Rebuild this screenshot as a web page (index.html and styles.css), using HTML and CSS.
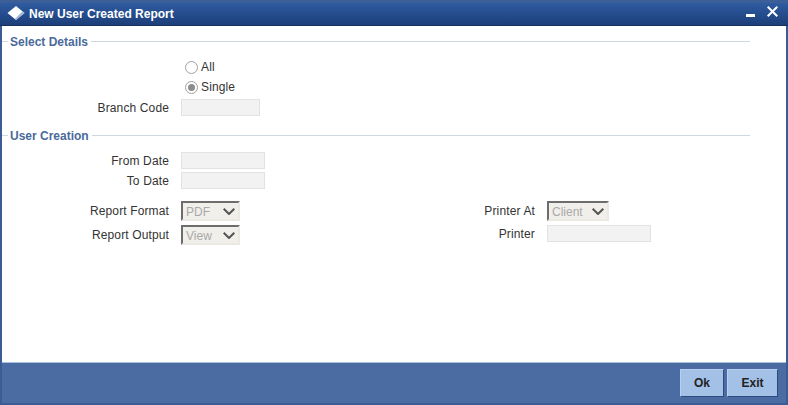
FILE: index.html
```html
<!DOCTYPE html>
<html lang="en">
<head>
<meta charset="utf-8">
<title>New User Created Report</title>
<link rel="stylesheet" href="styles.css">
</head>
<body>
<div class="window">
  <header class="titlebar">
    <svg class="logo" width="18" height="14" viewBox="0 0 18 14"><path d="M9 0 17.5 7 9 14 0.5 7Z" fill="#fff"/><path d="M15.5 5.4 17.5 7 9 14 7.8 13Z" fill="#9fb4d2"/></svg>
    <h1 class="title">New User Created Report</h1>
    <div class="controls">
      <svg width="9" height="3" viewBox="0 0 9 3" class="min"><rect width="9" height="3" fill="#fff"/></svg>
      <svg width="11" height="11" viewBox="0 0 11 11" class="close"><path d="M0.7 0.7 10.3 10.3M10.3 0.7 0.7 10.3" stroke="#fff" stroke-width="2" fill="none"/></svg>
    </div>
  </header>
  <main class="content">
    <div class="legend legend-first"><span>Select Details</span></div>
    <div class="radios">
      <label class="radio-row"><span class="radio"></span>All</label>
      <label class="radio-row"><span class="radio checked"></span>Single</label>
    </div>
    <div class="row branch"><span class="label">Branch Code</span><span class="input w79"></span></div>
    <div class="legend legend-second"><span>User Creation</span></div>
    <div class="dates">
      <div class="row"><span class="label">From Date</span><span class="input w84"></span></div>
      <div class="row"><span class="label">To Date</span><span class="input w84"></span></div>
    </div>
    <div class="columns">
      <div class="col-left">
        <div class="row sel-row"><span class="label">Report Format</span><span class="select w59">PDF<svg class="chev" width="12" height="7" viewBox="0 0 12 7"><path d="M0.7 0.7 6 6 11.3 0.7" stroke="#555" stroke-width="2" fill="none"/></svg></span></div>
        <div class="row sel-row"><span class="label">Report Output</span><span class="select w59">View<svg class="chev" width="12" height="7" viewBox="0 0 12 7"><path d="M0.7 0.7 6 6 11.3 0.7" stroke="#555" stroke-width="2" fill="none"/></svg></span></div>
      </div>
      <div class="col-right">
        <div class="row sel-row"><span class="label">Printer At</span><span class="select w62">Client<svg class="chev" width="12" height="7" viewBox="0 0 12 7"><path d="M0.7 0.7 6 6 11.3 0.7" stroke="#555" stroke-width="2" fill="none"/></svg></span></div>
        <div class="row"><span class="label">Printer</span><span class="input w104"></span></div>
      </div>
    </div>
  </main>
  <footer class="footer">
    <button class="btn" type="button">Ok</button>
    <button class="btn" type="button">Exit</button>
  </footer>
</div>
</body>
</html>
```
FILE: styles.css
```css
* { box-sizing: border-box; }
html, body { margin: 0; padding: 0; }
body { width: 788px; height: 405px; overflow: hidden; font-family: "Liberation Sans", Arial, sans-serif; font-size: 12px; letter-spacing: 0.13px; color: #333; background: #fff; }
.window { width: 788px; height: 405px; display: flex; flex-direction: column; background: #3a5b93; padding: 0 2px 2px; }
.titlebar { flex: none; height: 26px; margin: 0 -2px; display: flex; align-items: center; border-top: 3px solid #3d5f98; border-bottom: 1px solid #16305f; background: linear-gradient(#2f5ba0, #234a8a 60%, #1d3f78); padding: 0 10px 0 7px; }
.logo { flex: none; margin: 0 4px 2px 0; }
.title { margin: 0; font-size: 12px; font-weight: bold; color: #fff; letter-spacing: 0; }
.controls { margin-left: auto; display: flex; align-items: flex-start; gap: 12px; padding-bottom: 6px; }
.min { margin-top: 8px; }
.content { flex: 1; background: #fff; padding-top: 7px; min-height: 0; }
.legend { display: flex; align-items: center; height: 16px; width: 748px; color: #4a6a9b; font-weight: bold; letter-spacing: 0; }
.legend span { position: relative; top: 1px; }
.legend::before { content: ""; width: 6px; height: 1px; background: #cfd8e0; margin-right: 2px; }
.legend::after { content: ""; flex: 1; height: 1px; background: #cfd8e0; margin-left: 3px; }
.radios { margin: 11px 0 0 183px; display: flex; flex-direction: column; gap: 6px; }
.radio-row { display: flex; align-items: center; height: 14px; }
.radio { width: 13px; height: 13px; margin-right: 3px; border: 1px solid #a0a0a0; border-radius: 50%; background: #fff; position: relative; }
.radio.checked::after { content: ""; position: absolute; left: 2px; top: 2px; width: 7px; height: 7px; border-radius: 50%; background: #8c8c8c; }
.row { display: flex; align-items: center; height: 17px; }
.branch { margin-top: 5px; }
.legend-second { margin-top: 11px; }
.dates { margin-top: 9px; display: flex; flex-direction: column; gap: 3px; }
.label { flex: none; width: 167px; text-align: right; margin-right: 12px; }
.input { flex: none; height: 17px; background: #f2f2f2; border: 1px solid #e2e2e2; display: block; }
.w79 { width: 79px; } .w84 { width: 84px; } .w104 { width: 104px; } .w59 { width: 59px; } .w62 { width: 62px; }
.columns { display: flex; margin-top: 12px; }
.col-left { width: 366px; display: flex; flex-direction: column; gap: 4px; }
.sel-row { height: 20px; }
.col-right { display: flex; flex-direction: column; gap: 4px; }
.select { flex: none; height: 20px; display: flex; align-items: center; justify-content: space-between; padding: 1px 3px 0; letter-spacing: 0; background: #f1efe9; color: #a9a9a9; border: 2px solid; border-color: #6d6d6d #ece9e2 #ece9e2 #6d6d6d; }
.chev { flex: none; margin-top: -1px; }
.footer { flex: none; height: 41px; background: #4b6ca2; border-top: 1px solid #a9bfdf; display: flex; justify-content: flex-end; align-items: flex-start; gap: 3px; padding: 6px 8px 0 0; }
.btn { width: 44px; height: 28px; padding: 0; font: bold 12px "Liberation Sans", Arial, sans-serif; color: #222; background: #a3c0e6; border: 1px solid; border-color: #b9cfed #2c4a7e #2c4a7e #b9cfed; }
.btn + .btn { width: 51px; }
```
